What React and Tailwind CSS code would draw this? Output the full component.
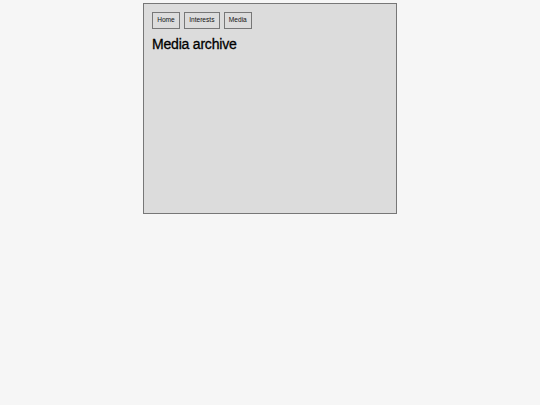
export default function App() {
  return (
    <div className="min-h-[405px] bg-[#f6f6f6] pt-[3px] pl-[143px] font-['Liberation_Sans',Arial,sans-serif]">
      <div className="w-[254px] h-[211px] border border-[#777] bg-[#dcdcdc] p-2">
        <nav className="flex gap-1">
          {["Home", "Interests", "Media"].map((label) => (
            <button
              key={label}
              className="h-[17px] border border-[#777] bg-[#dcdcdc] px-[4.2px] text-[6.6px] leading-none text-[#111]"
            >
              {label}
            </button>
          ))}
        </nav>
        <h1 className="mt-[8px] text-[14px] leading-none font-normal text-black tracking-[-0.2px] [-webkit-text-stroke:0.3px_black]">
          Media archive
        </h1>
      </div>
    </div>
  );
}
